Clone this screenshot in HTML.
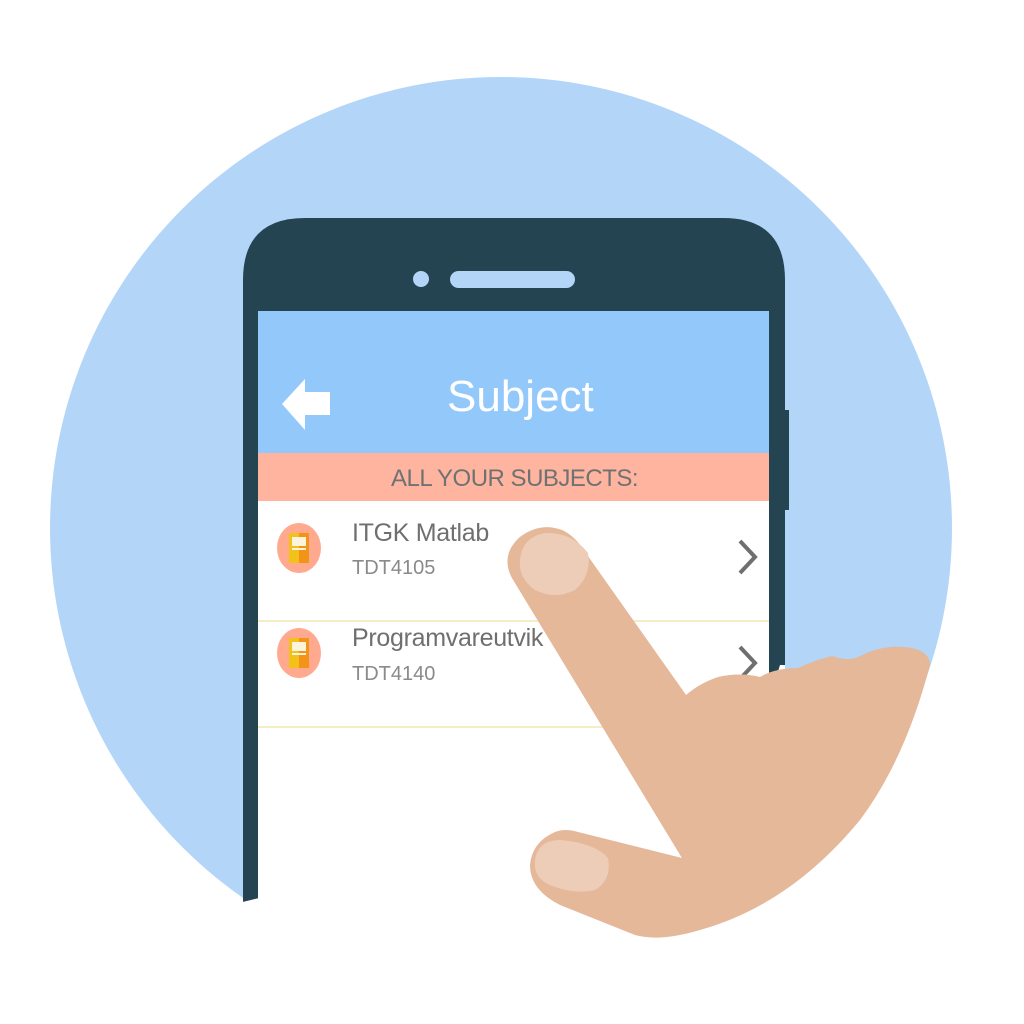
<!DOCTYPE html>
<html><head><meta charset="utf-8"><style>
html,body{margin:0;padding:0;background:#fff;}
body{width:1024px;height:1024px;position:relative;overflow:hidden;font-family:"Liberation Sans",sans-serif;}
.t{position:absolute;white-space:nowrap;}
</style></head><body>
<svg width="1024" height="1024" style="position:absolute;left:0;top:0">
  <circle cx="501" cy="528" r="451" fill="#b3d6f8"/>
  <path d="M243 280 Q243 218 305 218 L723 218 Q785 218 785 280 L785 905 L243 905 Z" fill="#244452"/>
  <rect x="783" y="410" width="6" height="100" fill="#244452"/>
  <circle cx="421" cy="279" r="8" fill="#b3d6f8"/>
  <rect x="450" y="271" width="125" height="17" rx="8.5" fill="#b3d6f8"/>
  <rect x="258" y="311" width="511" height="600" fill="#fff"/>
  <rect x="258" y="311" width="511" height="142" fill="#93c8fb"/>
  <rect x="258" y="453" width="511" height="48" fill="#ffb4a0"/>
  <line x1="258" y1="621" x2="769" y2="621" stroke="#f7edc4" stroke-width="2"/>
  <line x1="258" y1="727" x2="769" y2="727" stroke="#f7edc4" stroke-width="2"/>
  <path d="M282 404 L305 379 L305 392 L330 392 L330 415 L305 415 L305 430 Z" fill="#fff"/>
  <g>
    <ellipse cx="299" cy="548" rx="22" ry="25" fill="#ffaa8f"/>
    <rect x="289" y="533" width="10" height="30" fill="#f2c21a"/>
    <rect x="299" y="533" width="10" height="30" fill="#f39318"/>
    <rect x="292" y="537" width="14" height="9" fill="#fbf4dc"/>
    <rect x="292" y="548" width="14" height="2" fill="#fbf4dc"/>
  </g>
  <g>
    <ellipse cx="299" cy="653" rx="22" ry="25" fill="#ffaa8f"/>
    <rect x="289" y="638" width="10" height="30" fill="#f2c21a"/>
    <rect x="299" y="638" width="10" height="30" fill="#f39318"/>
    <rect x="292" y="642" width="14" height="9" fill="#fbf4dc"/>
    <rect x="292" y="653" width="14" height="2" fill="#fbf4dc"/>
  </g>
  <path d="M740 541 L755 557 L740 573" fill="none" stroke="#6f6f6f" stroke-width="4"/>
  <path d="M740 647 L755 663 L740 679" fill="none" stroke="#6f6f6f" stroke-width="4"/>
  <path d="M230 905 L540 830 L1024 640 L1024 1024 L0 1024 L0 905 Z" fill="#fff"/>
  <path d="M780 665 L785 665 L785 910 L700 920 Z" fill="#fff"/>
  <path d="M512 578 Q500 555 520 537 Q540 522 562 530 Q575 536 585 552 L686 695
           Q700 683 718 677 Q740 672 760 677 Q775 668 798 668 Q815 660 832 656 Q850 662 860 656
           Q885 643 912 648 Q930 652 930 665
           Q905 760 860 820 Q790 905 700 930 Q660 942 635 935
           L560 905 Q530 890 530 865 Q532 842 555 832 Q565 828 578 832 L682 858 Z" fill="#e5b89a"/>
  <path d="M535 860 Q538 840 560 840 Q595 843 608 858 Q612 880 595 890 Q575 895 550 885 Q533 878 535 860 Z" fill="#edcdb7"/>
</svg>
<div class="t" style="left:447px;top:372px;font-size:44px;color:#fff;">Subject</div>
<div class="t" style="left:391px;top:465px;font-size:24px;color:#6f7272;letter-spacing:-0.5px;">ALL YOUR SUBJECTS:</div>
<div class="t" style="left:352px;top:519px;font-size:25px;color:#6f6f6f;letter-spacing:-0.3px;">ITGK Matlab</div>
<div class="t" style="left:352px;top:557px;font-size:20px;color:#8a8a8a;">TDT4105</div>
<div class="t" style="left:352px;top:624px;font-size:25px;color:#6f6f6f;letter-spacing:-0.3px;">Programvareutvik</div>
<div class="t" style="left:352px;top:663px;font-size:20px;color:#8a8a8a;">TDT4140</div>
<svg width="1024" height="1024" style="position:absolute;left:0;top:0;pointer-events:none">
  <path d="M512 578 Q500 555 520 537 Q540 522 562 530 Q575 536 585 552 L686 695 L682 858 Z" fill="#e5b89a"/>
  <path d="M520 560 Q522 537 545 533 Q572 532 588 553 Q592 575 575 590 Q555 600 535 590 Q518 578 520 560 Z" fill="#edcdb7"/>
</svg>
</body></html>
